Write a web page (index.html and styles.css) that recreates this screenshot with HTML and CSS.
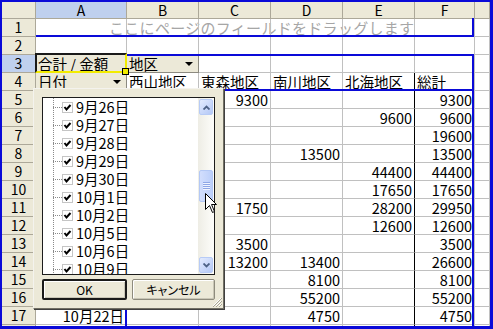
FILE: index.html
```html
<!DOCTYPE html>
<html lang="ja">
<head>
  <meta charset="UTF-8">
  <link rel="stylesheet" href="styles.css">
  <title>ピボットテーブル</title>
</head>
<body>
  <div class="window">
    <div class="sheet">
      <div class="row head">
        <div class="hdr"></div><div class="hdr sel">A</div><div class="hdr">B</div><div class="hdr">C</div><div class="hdr">D</div><div class="hdr">E</div><div class="hdr">F</div><div class="hdr"></div>
      </div>
      <div class="row">
        <div class="hdr">1</div><div class="hint">ここにページのフィールドをドラッグします</div><div></div><div></div><div></div><div></div><div></div><div></div>
      </div>
      <div class="row">
        <div class="hdr">2</div><div></div><div></div><div></div><div></div><div></div><div></div><div></div>
      </div>
      <div class="row">
        <div class="hdr sel">3</div><div class="field">合計 / 金額</div><div class="field">地区<span class="dd"></span></div><div></div><div></div><div></div><div></div><div></div>
      </div>
      <div class="row colhead">
        <div class="hdr">4</div><div class="field">日付<span class="dd"></span></div><div>西山地区</div><div>東森地区</div><div>南川地区</div><div>北海地区</div><div>総計</div><div></div>
      </div>
      <div class="row data">
        <div class="hdr">5</div><div>9月26日</div><div></div><div>9300</div><div></div><div></div><div>9300</div><div></div>
      </div>
      <div class="row data">
        <div class="hdr">6</div><div>9月27日</div><div></div><div></div><div></div><div>9600</div><div>9600</div><div></div>
      </div>
      <div class="row data">
        <div class="hdr">7</div><div>9月28日</div><div>19600</div><div></div><div></div><div></div><div>19600</div><div></div>
      </div>
      <div class="row data">
        <div class="hdr">8</div><div>9月29日</div><div></div><div></div><div>13500</div><div></div><div>13500</div><div></div>
      </div>
      <div class="row data">
        <div class="hdr">9</div><div>9月30日</div><div></div><div></div><div></div><div>44400</div><div>44400</div><div></div>
      </div>
      <div class="row data">
        <div class="hdr">10</div><div>10月1日</div><div></div><div></div><div></div><div>17650</div><div>17650</div><div></div>
      </div>
      <div class="row data">
        <div class="hdr">11</div><div>10月2日</div><div></div><div>1750</div><div></div><div>28200</div><div>29950</div><div></div>
      </div>
      <div class="row data">
        <div class="hdr">12</div><div>10月5日</div><div></div><div></div><div></div><div>12600</div><div>12600</div><div></div>
      </div>
      <div class="row data">
        <div class="hdr">13</div><div>10月6日</div><div></div><div>3500</div><div></div><div></div><div>3500</div><div></div>
      </div>
      <div class="row data">
        <div class="hdr">14</div><div>10月9日</div><div></div><div>13200</div><div>13400</div><div></div><div>26600</div><div></div>
      </div>
      <div class="row data">
        <div class="hdr">15</div><div>10月13日</div><div></div><div></div><div>8100</div><div></div><div>8100</div><div></div>
      </div>
      <div class="row data">
        <div class="hdr">16</div><div>10月16日</div><div></div><div></div><div>55200</div><div></div><div>55200</div><div></div>
      </div>
      <div class="row data">
        <div class="hdr">17</div><div>10月22日</div><div></div><div></div><div>4750</div><div></div><div>4750</div><div></div>
      </div>
      <div class="row data">
        <div class="hdr">18</div><div></div><div></div><div></div><div></div><div></div><div></div><div></div>
      </div>
    </div>

    <!-- pivot drop zone outlines -->
    <div class="zone zone-page"></div>
    <div class="zone zone-col"></div>
    <div class="zone zone-data"></div>

    <div class="active"><span class="handle"></span></div>

    <!-- 日付 filter dropdown -->
    <div class="filter-pop">
      <div class="list">
        <div class="tree">
          <div class="item"><span class="branch"></span><svg class="chk" width="11" height="11" viewBox="0 0 11 11"><rect x="0.5" y="0.5" width="10" height="10" fill="#fff" stroke="#8a8a8a" stroke-dasharray="1 1"/><polyline points="2.5,5 4.5,7.5 8.5,3" fill="none" stroke="#000" stroke-width="2"/></svg><span class="label">9月26日</span></div>
          <div class="item"><span class="branch"></span><svg class="chk" width="11" height="11" viewBox="0 0 11 11"><rect x="0.5" y="0.5" width="10" height="10" fill="#fff" stroke="#8a8a8a" stroke-dasharray="1 1"/><polyline points="2.5,5 4.5,7.5 8.5,3" fill="none" stroke="#000" stroke-width="2"/></svg><span class="label">9月27日</span></div>
          <div class="item"><span class="branch"></span><svg class="chk" width="11" height="11" viewBox="0 0 11 11"><rect x="0.5" y="0.5" width="10" height="10" fill="#fff" stroke="#8a8a8a" stroke-dasharray="1 1"/><polyline points="2.5,5 4.5,7.5 8.5,3" fill="none" stroke="#000" stroke-width="2"/></svg><span class="label">9月28日</span></div>
          <div class="item"><span class="branch"></span><svg class="chk" width="11" height="11" viewBox="0 0 11 11"><rect x="0.5" y="0.5" width="10" height="10" fill="#fff" stroke="#8a8a8a" stroke-dasharray="1 1"/><polyline points="2.5,5 4.5,7.5 8.5,3" fill="none" stroke="#000" stroke-width="2"/></svg><span class="label">9月29日</span></div>
          <div class="item"><span class="branch"></span><svg class="chk" width="11" height="11" viewBox="0 0 11 11"><rect x="0.5" y="0.5" width="10" height="10" fill="#fff" stroke="#8a8a8a" stroke-dasharray="1 1"/><polyline points="2.5,5 4.5,7.5 8.5,3" fill="none" stroke="#000" stroke-width="2"/></svg><span class="label">9月30日</span></div>
          <div class="item"><span class="branch"></span><svg class="chk" width="11" height="11" viewBox="0 0 11 11"><rect x="0.5" y="0.5" width="10" height="10" fill="#fff" stroke="#8a8a8a" stroke-dasharray="1 1"/><polyline points="2.5,5 4.5,7.5 8.5,3" fill="none" stroke="#000" stroke-width="2"/></svg><span class="label">10月1日</span></div>
          <div class="item"><span class="branch"></span><svg class="chk" width="11" height="11" viewBox="0 0 11 11"><rect x="0.5" y="0.5" width="10" height="10" fill="#fff" stroke="#8a8a8a" stroke-dasharray="1 1"/><polyline points="2.5,5 4.5,7.5 8.5,3" fill="none" stroke="#000" stroke-width="2"/></svg><span class="label">10月2日</span></div>
          <div class="item"><span class="branch"></span><svg class="chk" width="11" height="11" viewBox="0 0 11 11"><rect x="0.5" y="0.5" width="10" height="10" fill="#fff" stroke="#8a8a8a" stroke-dasharray="1 1"/><polyline points="2.5,5 4.5,7.5 8.5,3" fill="none" stroke="#000" stroke-width="2"/></svg><span class="label">10月5日</span></div>
          <div class="item"><span class="branch"></span><svg class="chk" width="11" height="11" viewBox="0 0 11 11"><rect x="0.5" y="0.5" width="10" height="10" fill="#fff" stroke="#8a8a8a" stroke-dasharray="1 1"/><polyline points="2.5,5 4.5,7.5 8.5,3" fill="none" stroke="#000" stroke-width="2"/></svg><span class="label">10月6日</span></div>
          <div class="item"><span class="branch"></span><svg class="chk" width="11" height="11" viewBox="0 0 11 11"><rect x="0.5" y="0.5" width="10" height="10" fill="#fff" stroke="#8a8a8a" stroke-dasharray="1 1"/><polyline points="2.5,5 4.5,7.5 8.5,3" fill="none" stroke="#000" stroke-width="2"/></svg><span class="label">10月9日</span></div>
        </div>
        <div class="vscroll">
          <div class="sb-btn"><svg width="7" height="5" viewBox="0 0 7 5"><polyline points="0.5,4.5 3.5,1.5 6.5,4.5" fill="none" stroke="#4d6185" stroke-width="1.8"/></svg></div>
          <div class="sb-track">
            <div class="sb-thumb"><svg width="7" height="8" viewBox="0 0 7 8"><path d="M0 0.5h7M0 2.5h7M0 4.5h7M0 6.5h7" stroke="#8ea7e6"/><path d="M0 1.5h7M0 3.5h7M0 5.5h7M0 7.5h7" stroke="#f0f4ff"/></svg></div>
          </div>
          <div class="sb-btn"><svg width="7" height="5" viewBox="0 0 7 5"><polyline points="0.5,0.5 3.5,3.5 6.5,0.5" fill="none" stroke="#4d6185" stroke-width="1.8"/></svg></div>
        </div>
      </div>
      <div class="pop-btns">
        <button class="btn default">OK</button>
        <button class="btn">キャンセル</button>
      </div>
      <svg class="grip" width="10" height="10" viewBox="0 0 10 10"><path d="M9 1L1 9M9 4L4 9M9 7L7 9" stroke="#fff"/><path d="M10 1L1 10M10 4L4 10M10 7L7 10" stroke="#a8a594"/></svg>
    </div>

    <svg class="cursor" width="13" height="21" viewBox="0 0 13 21"><path d="M0.5 0.5V16.5L4.5 12.5L7.5 19.5L9.5 18.5L6.5 11.5H11.5Z" fill="#fff" stroke="#000"/></svg>
  </div>
</body>
</html>
```

FILE: styles.css
```css
body {
  margin: 0;
  font-family: "Noto Sans CJK JP", "DejaVu Sans", sans-serif;
  color: #000;
}

.window {
  width: 493px;
  height: 329px;
  box-sizing: border-box;
  border: solid #0a0ad8;
  border-width: 2px 3px 3px 2px;
  position: relative;
  overflow: hidden;
  background-color: #fff;
}

.row {
  display: grid;
  grid-template-columns: 34px 91px 72px 72px 72px 72px 60px 15px;
  height: 18px;
}

.row.head {
  height: 17px;
}

.row > div {
  box-sizing: border-box;
  border-right: 1px solid #c0c0c0;
  border-bottom: 1px solid #c0c0c0;
  font-size: 14.5px;
  line-height: 17px;
  padding: 0 2px;
  white-space: nowrap;
}

.row > .hdr {
  background-color: #ece9d8;
  border-color: #aca899;
  text-align: center;
  font-size: 14px;
  padding: 0;
}

.row.head > .hdr {
  line-height: 16px;
}

.row > .hdr.sel {
  background-color: #bfd0ee;
}

.row > .hint {
  padding-left: 73px;
  font-size: 15px;
  letter-spacing: 0.3px;
  color: #a6a6a6;
}

.row > .field {
  background-color: #ece9d8;
  border-right-color: #8c8a80;
  border-bottom-color: #8c8a80;
  display: flex;
  justify-content: space-between;
  align-items: center;
}

.dd {
  width: 14px;
  height: 13px;
  display: flex;
  justify-content: center;
  align-items: center;
}

.dd::after {
  content: "";
  border-left: 4px solid transparent;
  border-right: 4px solid transparent;
  border-top: 4px solid #000;
}

.data > div {
  text-align: right;
}

.colhead > div:nth-child(6),
.data > div:nth-child(6) {
  border-right-color: #000;
}

.zone {
  position: absolute;
  box-sizing: border-box;
  border: 0 solid #0a0ad8;
}

.zone-page {
  left: 34px;
  top: 16px;
  width: 438px;
  height: 19px;
  border-right-width: 2px;
  border-bottom-width: 2px;
}

.zone-col {
  left: 124px;
  top: 52px;
  width: 348px;
  height: 37px;
  border-top-width: 2px;
  border-right-width: 2px;
  border-bottom-width: 2px;
}

.zone-data {
  left: 123px;
  top: 88px;
  width: 349px;
  height: 240px;
  border-left-width: 2px;
  border-right-width: 2px;
}

.active {
  position: absolute;
  left: 33px;
  top: 51px;
  width: 92px;
  height: 20px;
  box-sizing: border-box;
  border: 2px solid;
  border-color: #1a1a1a #f2ec00 #f2ec00 #1a1a1a;
}

.handle {
  position: absolute;
  right: -4px;
  bottom: -4px;
  width: 5px;
  height: 5px;
  background-color: #f2ec00;
  border: 1px solid #000;
}

.filter-pop {
  position: absolute;
  left: 31px;
  top: 86px;
  width: 191px;
  height: 221px;
  box-sizing: border-box;
  padding: 8px;
  background-color: #ece9d8;
  border: 1px solid;
  border-color: #f4f3ee #716f64 #716f64 #f4f3ee;
  box-shadow: 1px 1px 0 #404040;
}

.list {
  height: 178px;
  box-sizing: border-box;
  border: 1px solid #1c1c1c;
  background-color: #fff;
  display: flex;
}

.tree {
  flex: 1;
  overflow: hidden;
  background: linear-gradient(#8a8a8a 50%, transparent 50%) 10px 0 / 1px 2px repeat-y;
}

.item {
  height: 18px;
  display: flex;
  align-items: center;
  font-size: 14.5px;
}

.branch {
  width: 9px;
  margin-left: 10px;
  border-top: 1px dotted #8a8a8a;
}

.chk {
  flex: none;
}

.label {
  margin-left: 3px;
  line-height: 18px;
  white-space: nowrap;
}

.vscroll {
  width: 16px;
  padding: 1px 0;
  display: flex;
  flex-direction: column;
  background: linear-gradient(to right, #eeede5, #fdfdfa);
}

.sb-btn {
  height: 16px;
  margin: 0 1px;
  box-sizing: border-box;
  border: 1px solid #b7cbf6;
  border-radius: 2px;
  background: linear-gradient(135deg, #e3ebfe, #b4c8f6);
  display: flex;
  justify-content: center;
  align-items: center;
}

.sb-track {
  flex: 1;
}

.sb-thumb {
  margin: 55px 1px 0;
  height: 32px;
  box-sizing: border-box;
  border: 1px solid #b3c8f5;
  border-radius: 2px;
  background: linear-gradient(to right, #d2defd, #bccffa);
  display: flex;
  justify-content: center;
  align-items: center;
}

.pop-btns {
  margin-top: 4px;
  display: flex;
  gap: 5px;
}

.btn {
  height: 21px;
  width: 83px;
  padding: 0;
  box-sizing: border-box;
  font-family: "Noto Sans CJK JP", sans-serif;
  font-size: 12px;
  font-feature-settings: "palt";
  background-color: #ece9d8;
  border: 1px solid #8e8b7d;
  border-radius: 2px;
  box-shadow: inset 1px 1px #fff, inset -1px -1px #c9c6b6;
}

.btn.default {
  width: 85px;
  border: 2px solid #1a1a1a;
}

.grip {
  position: absolute;
  right: 1px;
  bottom: 1px;
}

.cursor {
  position: absolute;
  left: 203px;
  top: 191px;
}
```
